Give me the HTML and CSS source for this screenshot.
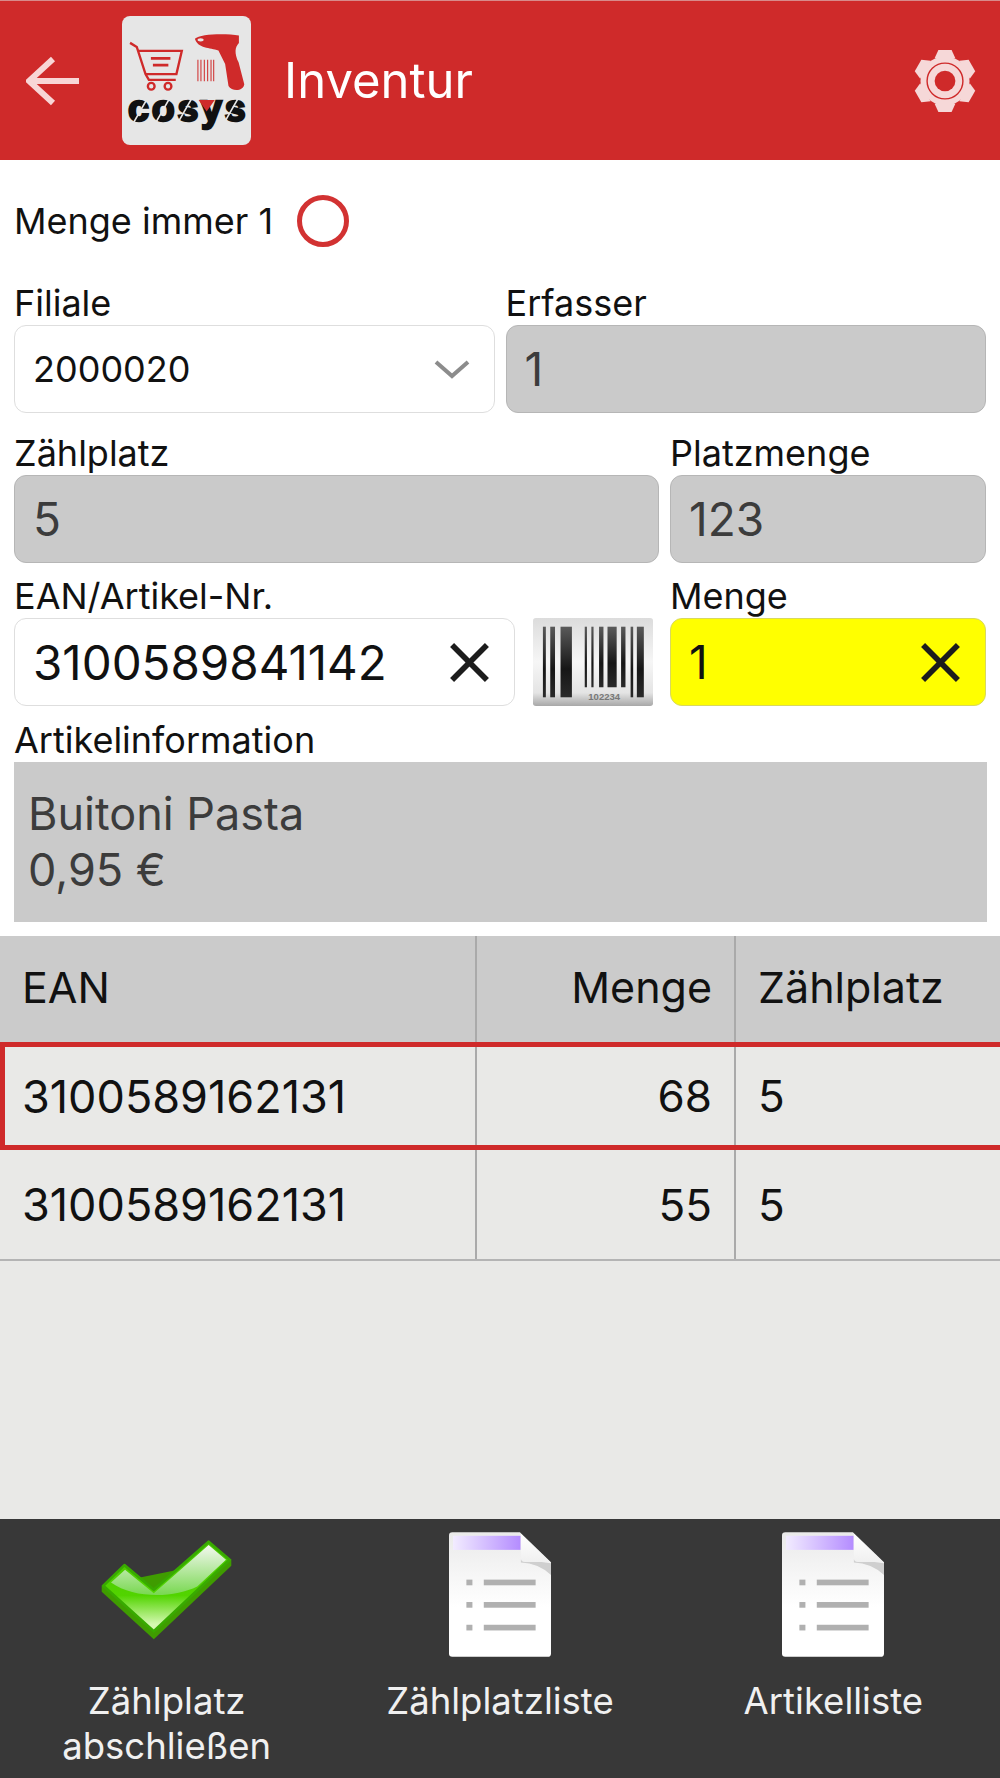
FILE: index.html
```html
<!DOCTYPE html>
<html>
<head>
  <title>Inventur</title>
  <link rel="stylesheet" href="styles.css">
</head>
<body>
  <div class="topbar">
    <svg class="back-icon" viewBox="0 0 54 50">
      <path d="M27 3 L3 25 L27 47 M3 25 H53" fill="none" stroke="#f8d6d6" stroke-width="6"/>
    </svg>
    <svg class="logo" viewBox="38 32 384 384">
      <rect x="38" y="32" width="384" height="384" rx="24" fill="#e6e6e6"/>
      <g fill="none" stroke="#cf2a2a" stroke-width="7">
        <path d="M62 112 L82 124 L108 205 L118 222 H198"/>
        <path d="M86 136 H216 L200 205 H108"/>
        <path d="M124 158 H182 M130 178 H176" stroke-width="8"/>
        <circle cx="125" cy="241" r="10"/>
        <circle cx="175" cy="241" r="10"/>
      </g>
      <path fill="#cf2a2a" d="M255 100 C270 84 350 84 386 90 L386 112 C374 125 372 142 385 170 L402 235 C400 256 365 258 355 240 L345 175 L325 135 C300 126 264 130 255 100 Z"/>
      <ellipse cx="272" cy="103" rx="9" ry="5" fill="#e6e6e6"/>
      <path stroke="#cf2a2a" stroke-width="3" d="M264 162 V226 M273 162 V226 M283 162 V226 M293 162 V226 M303 162 V226 M311 162 V226"/>
      <text class="logo-word" x="56" y="346" textLength="350" lengthAdjust="spacing">cosys</text>
      <path stroke="#e6e6e6" stroke-width="5" d="M72 350 L112 280 M138 350 L178 280 M204 350 L244 280 M342 350 L382 280"/>
      <path fill="#cf2a2a" d="M266 282 H314 L290 316 Z"/>
    </svg>
    <h1 class="title">Inventur</h1>
    <svg class="gear-icon" viewBox="-35 -35 70 70">
      <g fill="#f6d8d8">
        <circle r="26"/>
        <polygon id="tooth" points="-11,-24 -7,-33 7,-33 11,-24"/>
        <use href="#tooth" transform="rotate(60)"/>
        <use href="#tooth" transform="rotate(120)"/>
        <use href="#tooth" transform="rotate(180)"/>
        <use href="#tooth" transform="rotate(240)"/>
        <use href="#tooth" transform="rotate(300)"/>
      </g>
      <circle r="19" fill="none" stroke="#cf2a2a" stroke-width="1.5"/>
      <circle r="11" fill="#cf2a2a"/>
    </svg>
  </div>

  <div class="form">
    <div class="toggle-row">
      <span class="toggle-label">Menge immer 1</span>
      <span class="radio"></span>
    </div>

    <div class="row row-first">
      <div class="field half">
        <label>Filiale</label>
        <div class="box select-box">
          <span>2000020</span>
          <svg class="chevron" viewBox="0 0 36 20"><path d="M2 3 L18 17 L34 3" fill="none" stroke="#8c8c8c" stroke-width="4"/></svg>
        </div>
      </div>
      <div class="field half">
        <label>Erfasser</label>
        <div class="box disabled">1</div>
      </div>
    </div>

    <div class="row row-second">
      <div class="field wide">
        <label>Zählplatz</label>
        <div class="box disabled">5</div>
      </div>
      <div class="field narrow">
        <label>Platzmenge</label>
        <div class="box disabled">123</div>
      </div>
    </div>

    <div class="row">
      <div class="field wide">
        <label>EAN/Artikel-Nr.</label>
        <div class="ean-row">
          <div class="box ean-box">
            <span>3100589841142</span>
            <svg class="clear" viewBox="0 0 40 40"><path d="M3 3 L37 37 M37 3 L3 37" stroke="#1c1c1c" stroke-width="5.5"/></svg>
          </div>
          <svg class="barcode" viewBox="303 115 327 263" preserveAspectRatio="none">
            <defs>
              <linearGradient id="barcodeBg" x1="0" y1="0" x2="0" y2="1">
                <stop offset="0" stop-color="#dcdcdc"/>
                <stop offset="0.5" stop-color="#f6f6f6"/>
                <stop offset="0.85" stop-color="#e4e4e4"/>
                <stop offset="1" stop-color="#a8a8a8"/>
              </linearGradient>
              <linearGradient id="barFill" x1="0" y1="0" x2="0" y2="1">
                <stop offset="0" stop-color="#5a5a5a"/>
                <stop offset="0.6" stop-color="#161616"/>
                <stop offset="1" stop-color="#2a2a2a"/>
              </linearGradient>
            </defs>
            <rect x="303" y="115" width="327" height="263" rx="8" fill="url(#barcodeBg)"/>
            <g fill="url(#barFill)">
              <rect x="330" y="141" width="8" height="211"/>
              <rect x="350" y="141" width="13" height="211"/>
              <rect x="378" y="141" width="31" height="211"/>
              <rect x="444" y="141" width="6" height="181"/>
              <rect x="462" y="141" width="6" height="181"/>
              <rect x="483" y="141" width="12" height="181"/>
              <rect x="506" y="141" width="25" height="181"/>
              <rect x="543" y="141" width="12" height="181"/>
              <rect x="569" y="141" width="7" height="211"/>
              <rect x="586" y="141" width="19" height="211"/>
            </g>
            <text class="barcode-text" x="497" y="361">102234</text>
          </svg>
        </div>
      </div>
      <div class="field narrow">
        <label>Menge</label>
        <div class="box highlight">
          <span>1</span>
          <svg class="clear" viewBox="0 0 40 40"><path d="M3 3 L37 37 M37 3 L3 37" stroke="#1c1c1c" stroke-width="5.5"/></svg>
        </div>
      </div>
    </div>

    <div class="info-field">
      <label>Artikelinformation</label>
      <div class="info-box">Buitoni Pasta<br>0,95 €</div>
    </div>
  </div>

  <div class="table">
    <div class="table-row head">
      <div class="cell col-ean">EAN</div>
      <div class="cell col-qty">Menge</div>
      <div class="cell col-place">Zählplatz</div>
    </div>
    <div class="table-row selected">
      <div class="cell col-ean">3100589162131</div>
      <div class="cell col-qty">68</div>
      <div class="cell col-place">5</div>
    </div>
    <div class="table-row last">
      <div class="cell col-ean">3100589162131</div>
      <div class="cell col-qty">55</div>
      <div class="cell col-place">5</div>
    </div>
  </div>

  <div class="actions">
    <div class="action">
      <div class="action-icon">
        <svg class="check-icon" viewBox="300 120 392 302">
          <defs>
            <linearGradient id="checkFill" x1="0" y1="0" x2="0" y2="1">
              <stop offset="0" stop-color="#48c400"/>
              <stop offset="0.6" stop-color="#52d400"/>
              <stop offset="0.92" stop-color="#d4f8b0"/>
            </linearGradient>
            <linearGradient id="checkShine" x1="0" y1="0" x2="0" y2="1">
              <stop offset="0" stop-color="#f4f8f0"/>
              <stop offset="1" stop-color="#78d850"/>
            </linearGradient>
          </defs>
          <path fill="#3f9c00" d="M302 258 V278 L458 420 L690 200 V180 Z"/>
          <path fill="url(#checkFill)" stroke="#38aa00" stroke-width="8" stroke-linejoin="round" d="M370 198 L458 272 L622 128 L685 182 L458 396 L307 260 Z"/>
          <path fill="url(#checkShine)" d="M372 212 L458 282 L622 138 L674 182 L588 262 C520 296 400 300 330 250 Z"/>
        </svg>
      </div>
      <div class="action-label">Zählplatz<br>abschließen</div>
    </div>
    <div class="action">
      <div class="action-icon">
        <svg class="doc-icon" viewBox="843 97 305 373">
          <defs>
            <linearGradient id="docFill" x1="0" y1="0" x2="0" y2="1">
              <stop offset="0" stop-color="#eaeaea"/>
              <stop offset="0.6" stop-color="#ffffff"/>
            </linearGradient>
            <linearGradient id="docBand" x1="0" y1="0" x2="1" y2="0">
              <stop offset="0" stop-color="#f2ecff"/>
              <stop offset="1" stop-color="#b48cff"/>
            </linearGradient>
            <linearGradient id="docFold" x1="0" y1="0" x2="0" y2="1">
              <stop offset="0" stop-color="#ffffff"/>
              <stop offset="1" stop-color="#f0f0f0"/>
            </linearGradient>
          </defs>
          <path fill="url(#docFill)" d="M853 97 H1055 L1148 187 V460 Q1148 470 1138 470 H853 Q843 470 843 460 V107 Q843 97 853 97 Z"/>
          <rect x="855" y="108" width="202" height="42" fill="url(#docBand)"/>
          <path fill="#cfcfcf" d="M1058 178 L1148 190 V225 Q1110 190 1058 188 Z"/>
          <path fill="url(#docFold)" d="M1058 102 L1145 186 H1070 Q1058 186 1058 174 Z"/>
          <g fill="#b0b0b0">
            <rect x="895" y="239" width="18" height="17"/>
            <rect x="947" y="239" width="155" height="17"/>
            <rect x="895" y="306" width="18" height="17"/>
            <rect x="947" y="306" width="155" height="17"/>
            <rect x="895" y="374" width="18" height="17"/>
            <rect x="947" y="374" width="155" height="17"/>
          </g>
        </svg>
      </div>
      <div class="action-label">Zählplatzliste</div>
    </div>
    <div class="action">
      <div class="action-icon">
        <svg class="doc-icon" viewBox="843 97 305 373">
          <path fill="url(#docFill)" d="M853 97 H1055 L1148 187 V460 Q1148 470 1138 470 H853 Q843 470 843 460 V107 Q843 97 853 97 Z"/>
          <rect x="855" y="108" width="202" height="42" fill="url(#docBand)"/>
          <path fill="#cfcfcf" d="M1058 178 L1148 190 V225 Q1110 190 1058 188 Z"/>
          <path fill="url(#docFold)" d="M1058 102 L1145 186 H1070 Q1058 186 1058 174 Z"/>
          <g fill="#b0b0b0">
            <rect x="895" y="239" width="18" height="17"/>
            <rect x="947" y="239" width="155" height="17"/>
            <rect x="895" y="306" width="18" height="17"/>
            <rect x="947" y="306" width="155" height="17"/>
            <rect x="895" y="374" width="18" height="17"/>
            <rect x="947" y="374" width="155" height="17"/>
          </g>
        </svg>
      </div>
      <div class="action-label">Artikelliste</div>
    </div>
  </div>
</body>
</html>
```

FILE: styles.css
```css
* {
  box-sizing: border-box;
}
html, body {
  margin: 0;
  padding: 0;
}
body {
  width: 1000px;
  height: 1778px;
  display: flex;
  flex-direction: column;
  overflow: hidden;
  font-family: Inter, "Liberation Sans", sans-serif;
  color: #111111;
  background: #e9e9e7;
}

/* header */
.topbar {
  height: 160px;
  flex: none;
  display: flex;
  align-items: center;
  background: #cf2a2a;
  border-top: 1px solid #d88a8a;
  padding-left: 26px;
  padding-right: 22px;
}
.back-icon {
  width: 54px;
  height: 50px;
  flex: none;
}
.logo {
  width: 129px;
  height: 129px;
  flex: none;
  margin-left: 42px;
}
.logo-word {
  font-family: "Liberation Sans", sans-serif;
  font-size: 112px;
  font-weight: bold;
  fill: #111111;
  stroke: #111111;
  stroke-width: 7px;
}
.title {
  flex: 1;
  margin: 0 0 0 33px;
  font-size: 49px;
  font-weight: 400;
  color: #ffffff;
}
.gear-icon {
  width: 66px;
  height: 66px;
  flex: none;
}

/* form */
.form {
  flex: none;
  background: #ffffff;
  padding: 0 14px 14px;
}
.toggle-row {
  height: 108px;
  display: flex;
  align-items: center;
  padding-top: 14px;
}
.toggle-label {
  font-size: 36px;
}
.radio {
  width: 52px;
  height: 52px;
  margin-left: 24px;
  border: 5px solid #d23232;
  border-radius: 50%;
}
.row {
  display: flex;
  gap: 11px;
  margin-top: 11px;
}
.row-first {
  margin-top: 13px;
}
.row-second {
  margin-top: 18px;
}
.field {
  display: flex;
  flex-direction: column;
}
.half {
  width: 481px;
}
.wide {
  width: 645px;
}
.narrow {
  width: 316px;
}
label {
  display: block;
  font-size: 36px;
  line-height: 44px;
  height: 44px;
}
.box {
  height: 88px;
  display: flex;
  align-items: center;
  justify-content: space-between;
  padding: 0 18px;
  border: 1.5px solid #dedede;
  border-radius: 12px;
  font-size: 36px;
  background: #ffffff;
}
.disabled {
  background: #cacaca;
  border-color: #b6b6b6;
  color: #3c3c3c;
  font-size: 46px;
}
.select-box {
  padding-right: 24px;
}
.chevron {
  width: 36px;
  height: 20px;
}
.ean-row {
  display: flex;
  gap: 18px;
}
.ean-box {
  width: 501px;
  padding-right: 24px;
  font-size: 47.5px;
}
.barcode {
  width: 120px;
  height: 88px;
  flex: none;
}
.barcode-text {
  font-family: "Liberation Sans", sans-serif;
  font-size: 26px;
  font-weight: bold;
  fill: #777777;
  text-anchor: middle;
}
.highlight {
  background: #ffff00;
  border-color: #d8d860;
  font-size: 46px;
  padding-right: 24px;
}
.clear {
  width: 41px;
  height: 41px;
}
.info-field {
  margin-top: 12px;
}
.info-box {
  width: 973px;
  height: 160px;
  padding: 24px 14px 0;
  background: #cacaca;
  color: #3c3c3c;
  font-size: 45px;
  line-height: 56px;
}

/* table */
.table {
  flex: none;
  overflow: hidden;
}
.table-row {
  display: flex;
  height: 108px;
  align-items: stretch;
  font-size: 44px;
}
.head {
  height: 106px;
  background: #cbcbcb;
  font-size: 43px;
}
.head .cell {
  padding-bottom: 4px;
}
.selected {
  margin-right: -6px;
  outline: 5px solid #cf2a2a;
  outline-offset: -5px;
}
.selected .col-ean, .last .col-ean {
  font-size: 45px;
}
.last {
  height: 111px;
  border-bottom: 2px solid #b4b4b4;
}
.cell {
  display: flex;
  align-items: center;
  padding: 0 22px;
}
.col-ean {
  width: 477px;
  border-right: 2px solid #aaaaaa;
}
.col-qty {
  width: 259px;
  justify-content: flex-end;
  border-right: 2px solid #aaaaaa;
}
.col-place {
  flex: 1;
}

/* bottom actions */
.actions {
  margin-top: auto;
  height: 259px;
  flex: none;
  display: flex;
  background: #383838;
}
.action {
  width: 333.33px;
  display: flex;
  flex-direction: column;
  align-items: center;
}
.action-icon {
  height: 138px;
  display: flex;
  align-items: flex-end;
}
.check-icon {
  width: 131px;
  height: 101px;
  margin-bottom: 17px;
}
.doc-icon {
  width: 102px;
  height: 125px;
}
.action-label {
  margin-top: 22px;
  font-size: 36.5px;
  line-height: 45px;
  text-align: center;
  color: #f0f0f0;
}
```
